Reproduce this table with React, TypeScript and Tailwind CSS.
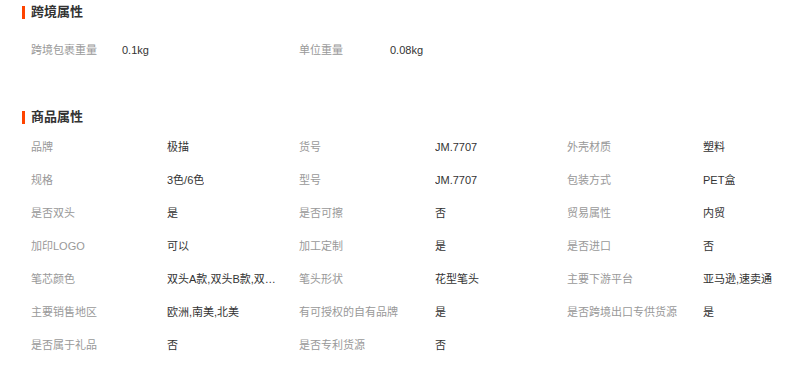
const crossBorder: [string, string][] = [
  ['跨境包裹重量', '0.1kg'],
  ['单位重量', '0.08kg'],
];

const goods: [string, string][] = [
  ['品牌', '极描'],
  ['货号', 'JM.7707'],
  ['外壳材质', '塑料'],
  ['规格', '3色/6色'],
  ['型号', 'JM.7707'],
  ['包装方式', 'PET盒'],
  ['是否双头', '是'],
  ['是否可擦', '否'],
  ['贸易属性', '内贸'],
  ['加印LOGO', '可以'],
  ['加工定制', '是'],
  ['是否进口', '否'],
  ['笔芯颜色', '双头A款,双头B款,双头C款'],
  ['笔头形状', '花型笔头'],
  ['主要下游平台', '亚马逊,速卖通'],
  ['主要销售地区', '欧洲,南美,北美'],
  ['有可授权的自有品牌', '是'],
  ['是否跨境出口专供货源', '是'],
  ['是否属于礼品', '否'],
  ['是否专利货源', '否'],
];

function SectionTitle({ title }: { title: string }) {
  return (
    <div className="flex items-center h-6">
      <span className="w-[3px] h-[13px] bg-[#ff4400] mr-[6px]" />
      <span className="text-[13px] font-bold text-[#333]">{title}</span>
    </div>
  );
}

function Attr({ label, value }: { label: string; value: string }) {
  return (
    <div className="flex items-center h-[33px] text-[11px]">
      <span className="w-[136px] shrink-0 text-[#999]">{label}</span>
      <span className="max-w-[114px] truncate text-[#333]">{value}</span>
    </div>
  );
}

export default function App() {
  return (
    <div
      className="w-[800px] h-[367px] bg-white pl-[22px] overflow-hidden"
      style={{ fontFamily: '"Liberation Sans", "Noto Sans CJK SC", sans-serif' }}
    >
      <SectionTitle title="跨境属性" />
      <div className="grid grid-cols-[268px_268px] pl-[9px] mt-[10px]">
        {crossBorder.map(([l, v]) => (
          <div key={l} className="flex items-center h-[33px] text-[11px]">
            <span className="w-[91px] shrink-0 text-[#999]">{l}</span>
            <span className="text-[#333]">{v}</span>
          </div>
        ))}
      </div>
      <div className="mt-[38px]">
        <SectionTitle title="商品属性" />
      </div>
      <div className="grid grid-cols-[268px_268px_268px] pl-[9px] mt-[2px]">
        {goods.map(([l, v]) => (
          <Attr key={l} label={l} value={v} />
        ))}
      </div>
    </div>
  );
}
